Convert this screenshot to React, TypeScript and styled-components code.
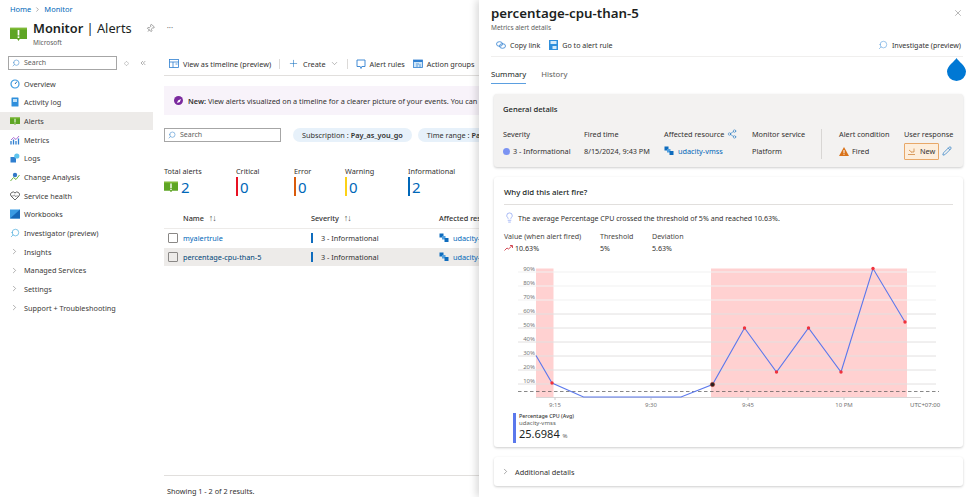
import React from 'react';
import styled, { createGlobalStyle } from 'styled-components';
import { ChevronDown, ChevronRight, ChevronsLeft, Diamond, Lightbulb, Pencil, Pin, Plus, Search, Share2, X } from 'lucide-react';

const GlobalStyle = createGlobalStyle`
  html, body { margin: 0; padding: 0; background: #fff; }
  body { font-family: "Noto Sans", "Open Sans", sans-serif; color: #323130; }
`;

const blue = '#0067b8';

const AlertGlyph = ({ size = 16 }: { size?: number }) => (
  <svg width={size} height={size * 0.85} viewBox="0 0 20 17">
    <path d="M0 1h20v13H11.5L10 16.5 8.500 14H0z" fill="#5ea524" />
    <path d="M0 1h20v2H0z" fill="#7fba35" />
    <rect x="9" y="3.500" width="2" height="6.500" fill="#fff" />
    <rect x="9" y="11" width="2" height="2" fill="#fff" />
  </svg>
);

const ResourceGlyph = () => (
  <svg width="10" height="10" viewBox="0 0 10 10">
    <rect x="0.500" y="0.500" width="4" height="4" fill="#0f6cbd" />
    <rect x="3" y="3" width="3.500" height="3.500" fill="#50a0e0" />
    <rect x="5.500" y="5" width="4" height="4" fill="#0f6cbd" />
  </svg>
);

const navIcons: Record<string, React.ReactNode> = {
  Overview: (
    <svg width="10" height="10" viewBox="0 0 10 10">
      <circle cx="5" cy="5" r="4" fill="none" stroke="#3b9ae1" strokeWidth="1.200" />
      <path d="M5 5l2-2.500" stroke="#1f6fb5" strokeWidth="1" />
    </svg>
  ),
  'Activity log': (
    <svg width="10" height="10" viewBox="0 0 10 10">
      <rect x="1.500" y="0.500" width="7" height="9" rx="0.500" fill="#2f8fdc" />
      <rect x="3" y="2" width="4" height="3" fill="#bfe0f7" />
    </svg>
  ),
  Alerts: <AlertGlyph size={10} />,
  Metrics: (
    <svg width="10" height="10" viewBox="0 0 10 10">
      <path d="M1 9.500V6M3.500 9.500V4.500M6 9.500V6M8.500 9.500V3.500" stroke="#2f7fd0" strokeWidth="1.300" />
      <path d="M1 5l2.500-2.500L6 4.500 9 1" fill="none" stroke="#9b4fc9" strokeWidth="0.800" />
    </svg>
  ),
  Logs: (
    <svg width="10" height="10" viewBox="0 0 10 10">
      <rect x="0.500" y="4" width="5.500" height="5.500" fill="#2f7fd0" />
      <circle cx="6.800" cy="3" r="2.600" fill="#5ec4ee" />
    </svg>
  ),
  'Change Analysis': (
    <svg width="10" height="10" viewBox="0 0 10 10">
      <path d="M0.500 9L3.500 5.500 6 7.500 9.500 3" fill="none" stroke="#6cb43c" strokeWidth="1" />
      <circle cx="5" cy="3" r="2.200" fill="#3378c6" />
    </svg>
  ),
  'Service health': (
    <svg width="10" height="10" viewBox="0 0 10 10">
      <path d="M5 9L1 5a2.400 2.400 0 0 1 4-3 2.400 2.400 0 0 1 4 3z" fill="none" stroke="#555" strokeWidth="0.900" />
      <path d="M1.500 5h2l1-1.200 1 2 .7-.8h2" fill="none" stroke="#555" strokeWidth="0.600" />
    </svg>
  ),
  Workbooks: (
    <svg width="10" height="10" viewBox="0 0 10 10">
      <rect width="10" height="9" y="0.500" fill="#3a9be3" />
      <path d="M0 9.500L10 .5v9z" fill="#1668b8" />
    </svg>
  ),
  'Investigator (preview)': <Search size={10} color="#38a3d8" strokeWidth={1.500} style={{ transform: 'scaleX(-1)' }} />,
};

const navItems = ['Overview', 'Activity log', 'Alerts', 'Metrics', 'Logs', 'Change Analysis', 'Service health', 'Workbooks', 'Investigator (preview)'];
const navGroups = ['Insights', 'Managed Services', 'Settings', 'Support + Troubleshooting'];

const stats = [
  { label: 'Total alerts', value: '2', width: 72 },
  { label: 'Critical', value: '0', color: '#e81123', width: 58 },
  { label: 'Error', value: '0', color: '#da5b0b', width: 51 },
  { label: 'Warning', value: '0', color: '#fcd116', width: 63 },
  { label: 'Informational', value: '2', color: '#0067b8', width: 60 },
];

const rows = ['myalertrule', 'percentage-cpu-than-5'];

const details = [
  { label: 'Severity', width: 81, value: <><SeverityDot />3 - Informational</> },
  { label: 'Fired time', width: 80, value: '8/15/2024, 9:43 PM' },
  {
    label: 'Affected resource',
    width: 88,
    icon: <Share2 size={10} color="#0f6cbd" strokeWidth={1.200} />,
    value: <InlineLink><ResourceGlyph />udacity-vmss</InlineLink>,
  },
  { label: 'Monitor service', width: 69, value: 'Platform' },
];

const yLabels = ['90%', '80%', '70%', '60%', '50%', '40%', '30%', '20%', '10%'];
const linePoints = [
  [536, 354.5], [552, 382], [583.5, 396], [681, 396], [712.5, 383.5], [744.5, 327],
  [776.5, 371], [808.5, 327], [841, 371], [873, 267.5], [905, 321],
];
const firedPoints = linePoints.slice(5);
const xTicks = [
  { x: 555, label: '9:15' },
  { x: 651, label: '9:30' },
  { x: 748, label: '9:45' },
  { x: 844, label: '10 PM' },
];

const Chart = () => (
  <ChartSvg width="440" height="148" viewBox="510 262 440 148">
    <rect x="536" y="267.500" width="17.500" height="129" fill="#ff0000" fillOpacity="0.180" />
    <rect x="711" y="267.500" width="196" height="129" fill="#ff0000" fillOpacity="0.180" />
    {yLabels.map((label, i) => (
      <g key={label}>
        <line x1="518" x2="936" y1={271 + i * 14} y2={271 + i * 14} stroke={i < 3 ? '#f1f1f1' : '#e2e0e0'} />
        <text x="535" y={269.500 + i * 14} textAnchor="end" fontSize="6" fill="#777">{label}</text>
      </g>
    ))}
    <line x1="536" x2="921" y1="396.500" y2="396.500" stroke="#d8d6d6" />
    <line x1="518" x2="939" y1="390.500" y2="390.500" stroke="#555" strokeWidth="0.700" strokeDasharray="3.500 2.500" />
    {xTicks.map(t => (
      <g key={t.label}>
        <line x1={t.x} x2={t.x} y1="396.500" y2="399" stroke="#ccc" />
        <text x={t.x} y="405.500" textAnchor="middle" fontSize="6" fill="#777">{t.label}</text>
      </g>
    ))}
    <text x="910" y="405.500" fontSize="6" fill="#666">UTC+07:00</text>
    <polyline points={linePoints.map(p => p.join(',')).join(' ')} fill="none" stroke="#5b78ec" strokeWidth="1.100" />
    <circle cx="552" cy="382" r="1.700" fill="#f0323c" />
    <circle cx="712.500" cy="383.500" r="2.200" fill="#2b2020" stroke="#c43" strokeWidth="0.500" />
    {firedPoints.map(([x, y]) => <circle key={x} cx={x} cy={y} r="1.700" fill="#f0323c" />)}
  </ChartSvg>
);

export default function App() {
  return (
    <Page>
      <GlobalStyle />
      <Blade>
        <Breadcrumb>
          <a>Home</a><ChevronRight size={7} color="#777" /><a>Monitor</a>
        </Breadcrumb>
        <BladeHeader>
          <AlertGlyph size={17} />
          <BladeTitles>
            <BladeTitle>Monitor <span>| Alerts</span></BladeTitle>
            <BladeSubtitle>Microsoft</BladeSubtitle>
          </BladeTitles>
          <Pin size={9} color="#444" strokeWidth={1.200} style={{ transform: 'rotate(40deg)', marginLeft: 14, marginTop: 4 }} />
          <MoreDots>···</MoreDots>
        </BladeHeader>
        <BladeBody>
          <Sidebar>
            <SidebarTop>
              <SearchBox $width={109}><Search size={8} color="#5b9bd5" style={{ transform: 'scaleX(-1)' }} />Search</SearchBox>
              <Diamond size={5} color="#777" />
              <ChevronsLeft size={8} color="#888" style={{ marginLeft: 3 }} />
            </SidebarTop>
            <NavList>
              {navItems.map(name => (
                <NavItem key={name} $active={name === 'Alerts'}>
                  <NavIcon>{navIcons[name]}</NavIcon>{name}
                </NavItem>
              ))}
              {navGroups.map(name => (
                <NavItem key={name}>
                  <NavIcon><ChevronRight size={9} color="#555" strokeWidth={1.200} /></NavIcon>{name}
                </NavItem>
              ))}
            </NavList>
          </Sidebar>
          <Main>
            <Toolbar>
              <ToolButton>
                <svg width="10" height="9" viewBox="0 0 10 9">
                  <rect x="0.500" y="0.500" width="9" height="8" fill="none" stroke="#2f7fd0" strokeWidth="0.800" />
                  <path d="M.5 3h9M4 3v5.500M6.500 5h2" stroke="#2f7fd0" strokeWidth="0.800" />
                </svg>
                View as timeline (preview)
              </ToolButton>
              <ToolDivider />
              <ToolButton>
                <Plus size={11} color="#0f6cbd" strokeWidth={1.200} />Create
                <ChevronDown size={9} color="#666" strokeWidth={1.200} />
              </ToolButton>
              <ToolDivider />
              <ToolButton>
                <svg width="10" height="10" viewBox="0 0 10 10">
                  <path d="M1 1h8v6.500H5.800L5 9.500 4.200 7.500H1z" fill="none" stroke="#2f7fd0" strokeWidth="0.900" />
                </svg>
                Alert rules
              </ToolButton>
              <ToolButton>
                <svg width="10" height="10" viewBox="0 0 10 10">
                  <rect x="0.500" y="1" width="9" height="7.500" fill="#cfe6f8" stroke="#2f7fd0" strokeWidth="0.800" />
                  <rect x="0.500" y="1" width="9" height="2" fill="#2f7fd0" />
                  <path d="M3 5h3M3 7h2M7 5v3.500" stroke="#2f7fd0" strokeWidth="0.700" />
                </svg>
                Action groups
              </ToolButton>
            </Toolbar>
            <Banner>
              <BannerBadge>
                <svg width="6" height="6" viewBox="0 0 6 6"><path d="M1 5l1-2.500L5 1 3.800 4z" fill="#fff" /></svg>
              </BannerBadge>
              <BannerText><b>New:</b> View alerts visualized on a timeline for a clearer picture of your events. You can switch back</BannerText>
            </Banner>
            <FilterRow>
              <SearchBox $width={117}><Search size={8} color="#5b9bd5" style={{ transform: 'scaleX(-1)' }} />Search</SearchBox>
              <FilterPill $left={12}>Subscription : <b>Pay_as_you_go</b></FilterPill>
              <FilterPill $left={6}>Time range : <b>Past 24h</b></FilterPill>
            </FilterRow>
            <StatRow>
              {stats.map(s => (
                <Stat key={s.label} style={{ width: s.width }}>
                  <StatLabel>{s.label}</StatLabel>
                  <StatValue $color={s.color}>
                    {!s.color && <AlertGlyph size={14} />}
                    {s.value}
                  </StatValue>
                </Stat>
              ))}
            </StatRow>
            <AlertTable>
              <TableRow $header>
                <span />
                <span>Name <SortMark>↑↓</SortMark></span>
                <span>Severity <SortMark>↑↓</SortMark></span>
                <span>Affected resource</span>
              </TableRow>
              {rows.map((name, i) => (
                <TableRow key={name} $selected={i === 1}>
                  <Checkbox />
                  <RowLink $selected={i === 1}>{name}</RowLink>
                  <SeverityCell><SeverityBar />3 - Informational</SeverityCell>
                  <InlineLink><ResourceGlyph />udacity-vmss</InlineLink>
                </TableRow>
              ))}
            </AlertTable>
            <Footer>Showing 1 - 2 of 2 results.</Footer>
          </Main>
        </BladeBody>
      </Blade>
      <Panel>
        <PanelHead>
          <PanelTitle>percentage-cpu-than-5</PanelTitle>
          <X size={10} color="#666" strokeWidth={1.100} />
        </PanelHead>
        <PanelSubtitle>Metrics alert details</PanelSubtitle>
        <PanelToolbar>
          <ToolButton>
            <svg width="10" height="8" viewBox="0 0 10 8">
              <ellipse cx="3.500" cy="3" rx="3" ry="2.300" fill="none" stroke="#2f7fd0" strokeWidth="0.800" />
              <ellipse cx="6.500" cy="5" rx="3" ry="2.300" fill="none" stroke="#2f7fd0" strokeWidth="0.800" />
            </svg>
            Copy link
          </ToolButton>
          <ToolButton>
            <svg width="9" height="10" viewBox="0 0 9 10">
              <rect width="9" height="10" fill="#2f8fdc" />
              <rect x="1.500" y="1" width="6" height="3" fill="#d5ebfa" />
              <rect x="3.500" y="6" width="4" height="3" fill="#d5ebfa" />
            </svg>
            Go to alert rule
          </ToolButton>
          <ToolSpacer />
          <ToolButton>
            <Search size={10} color="#3f8fd8" strokeWidth={1.200} style={{ transform: 'scaleX(-1)' }} />
            Investigate (preview)
          </ToolButton>
        </PanelToolbar>
        <Tabs>
          <Tab $active>Summary</Tab>
          <Tab>History</Tab>
        </Tabs>
        <Droplet>
          <svg width="19" height="23" viewBox="0 0 19 23">
            <path d="M9.500 0C11 3 19 8 19 13.500A9.500 9.500 0 0 1 0 13.500C0 8 8 3 9.500 0z" fill="#0078d4" />
          </svg>
        </Droplet>
        <GeneralCard>
          <CardTitle>General details</CardTitle>
          <DetailsRow>
            {details.map(d => (
              <Detail key={d.label} style={{ width: d.width }}>
                <DetailLabel>{d.label}{d.icon}</DetailLabel>
                <DetailValue>{d.value}</DetailValue>
              </Detail>
            ))}
            <DetailDivider />
            <Detail style={{ width: 65 }}>
              <DetailLabel>Alert condition</DetailLabel>
              <DetailValue>
                <svg width="10" height="9" viewBox="0 0 10 9">
                  <path d="M5 0l5 9H0z" fill="#d9731a" />
                  <rect x="4.500" y="3" width="1" height="3.200" fill="#fff" />
                  <rect x="4.500" y="6.800" width="1" height="1" fill="#fff" />
                </svg>
                Fired
              </DetailValue>
            </Detail>
            <Detail>
              <DetailLabel>User response</DetailLabel>
              <DetailValue>
                <NewBadge>
                  <svg width="8" height="7" viewBox="0 0 8 7">
                    <path d="M0 6.500h7M1 2l3 2.500M6 .5v3.500H3.500" fill="none" stroke="#c8782a" strokeWidth="0.700" />
                  </svg>
                  New
                </NewBadge>
                <Pencil size={10} color="#0f6cbd" strokeWidth={1.500} />
              </DetailValue>
            </Detail>
          </DetailsRow>
        </GeneralCard>
        <WhyCard>
          <WhyTitle>Why did this alert fire?</WhyTitle>
          <Insight>
            <Lightbulb size={11} color="#6f8cf0" strokeWidth={1.300} />
            The average Percentage CPU crossed the threshold of 5% and reached 10.63%.
          </Insight>
          <Metrics>
            <Metric style={{ width: 96 }}>
              <span>Value (when alert fired)</span>
              <MetricValue>
                <svg width="9" height="6" viewBox="0 0 9 6">
                  <path d="M.5 5.500L3 3l1.500 1L8 .8M6 .5h2.500V3" fill="none" stroke="#c8202c" strokeWidth="0.800" />
                </svg>
                10.63%
              </MetricValue>
            </Metric>
            <Metric style={{ width: 52 }}><span>Threshold</span><MetricValue>5%</MetricValue></Metric>
            <Metric><span>Deviation</span><MetricValue>5.63%</MetricValue></Metric>
          </Metrics>
          <Chart />
          <Legend>
            <LegendName>Percentage CPU (Avg)</LegendName>
            <LegendSource>udacity-vmss</LegendSource>
            <LegendValue>25.6984 <small>%</small></LegendValue>
          </Legend>
        </WhyCard>
        <AdditionalCard>
          <ChevronRight size={9} color="#444" strokeWidth={1.200} />
          Additional details
        </AdditionalCard>
      </Panel>
    </Page>
  );
}

function SeverityDot() {
  return <Dot />;
}

function InlineLink({ children }: { children: React.ReactNode }) {
  return <ResourceLink>{children}</ResourceLink>;
}

const Page = styled.div`
  display: flex;
  width: 977px;
  height: 497px;
  overflow: hidden;
  font-size: 7.3px;
  line-height: 10px;
`;

const Blade = styled.div`
  width: 479px;
  flex: none;
  overflow: hidden;
  display: flex;
  flex-direction: column;
`;

const Breadcrumb = styled.div`
  display: flex;
  align-items: center;
  gap: 3px;
  height: 10px;
  margin: 4px 0 0 10px;
  font-size: 7.5px;
  color: ${blue};
`;

const BladeHeader = styled.div`
  display: flex;
  align-items: flex-start;
  height: 26px;
  margin: 6px 0 0 10px;
  svg:first-child { margin-top: 7px; }
`;

const BladeTitles = styled.div`
  margin-left: 6px;
`;

const BladeTitle = styled.div`
  font-size: 12.800px;
  line-height: 16px;
  font-weight: 600;
  color: #201f1e;
  white-space: nowrap;
  span { font-weight: 400; }
`;

const BladeSubtitle = styled.div`
  font-size: 6.500px;
  line-height: 9px;
  margin-top: 2px;
  color: #605e5c;
`;

const MoreDots = styled.span`
  margin: 3px 0 0 12px;
  color: #777;
  font-size: 8px;
`;

const BladeBody = styled.div`
  display: flex;
  flex: 1;
  margin-top: 10px;
`;

const Sidebar = styled.div`
  width: 153px;
  flex: none;
`;

const SidebarTop = styled.div`
  display: flex;
  align-items: center;
  gap: 7px;
  margin-left: 8px;
  height: 14px;
`;

const SearchBox = styled.div<{ $width: number }>`
  box-sizing: border-box;
  width: ${p => p.$width}px;
  height: 14px;
  flex: none;
  display: flex;
  align-items: center;
  gap: 4px;
  padding-left: 3px;
  border: 1px solid #a6a6a6;
  border-bottom-width: 1.500px;
  color: #605e5c;
  font-size: 7px;
`;

const NavList = styled.div`
  margin-top: 4.500px;
`;

const NavItem = styled.div<{ $active?: boolean }>`
  display: flex;
  align-items: center;
  height: 18.650px;
  padding-left: 10px;
  color: #3b3a39;
  white-space: nowrap;
  background: ${p => (p.$active ? '#edebe9' : 'transparent')};
`;

const NavIcon = styled.span`
  width: 14px;
  display: flex;
  align-items: center;
`;

const Main = styled.div`
  flex: 1;
  min-width: 0;
  padding-left: 11px;
  display: flex;
  flex-direction: column;
  overflow: hidden;
`;

const Toolbar = styled.div`
  display: flex;
  align-items: center;
  gap: 8px;
  height: 17px;
  padding: 0 0 3px 5px;
  margin-top: -1px;
  border-bottom: 1px solid #e1dfdd;
  white-space: nowrap;
`;

const ToolButton = styled.span`
  display: inline-flex;
  align-items: center;
  gap: 4px;
  color: #323130;
  white-space: nowrap;
`;

const ToolDivider = styled.span`
  width: 1px;
  height: 10px;
  background: #dcdad8;
`;

const Banner = styled.div`
  display: flex;
  align-items: center;
  gap: 5px;
  height: 29px;
  margin-top: 10px;
  padding-left: 10px;
  background: #f8f3fa;
  white-space: nowrap;
  overflow: hidden;
`;

const BannerBadge = styled.span`
  width: 9px;
  height: 9px;
  flex: none;
  border-radius: 50%;
  background: #7b2a9e;
  display: flex;
  align-items: center;
  justify-content: center;
`;

const BannerText = styled.span`
  color: #323130;
  b { font-weight: 600; }
`;

const FilterRow = styled.div`
  display: flex;
  align-items: center;
  margin-top: 13px;
  white-space: nowrap;
  overflow: hidden;
`;

const FilterPill = styled.span<{ $left: number }>`
  flex: none;
  height: 14px;
  display: inline-flex;
  align-items: center;
  margin-left: ${p => p.$left}px;
  padding: 0 9px;
  border-radius: 8px;
  background: #e7f1fa;
  b { font-weight: 600; margin-left: 2px; }
`;

const StatRow = styled.div`
  display: flex;
  margin-top: 24px;
`;

const Stat = styled.div`
  flex: none;
`;

const StatLabel = styled.div`
  white-space: nowrap;
  color: #323130;
`;

const StatValue = styled.div<{ $color?: string }>`
  display: flex;
  align-items: center;
  gap: 3px;
  height: 19px;
  margin-top: 1px;
  font-size: 15px;
  color: ${blue};
  padding-left: ${p => (p.$color ? '2px' : '0')};
  border-left: ${p => (p.$color ? `2.500px solid ${p.$color}` : 'none')};
`;

const AlertTable = styled.div`
  margin-top: 13px;
`;

const TableRow = styled.div<{ $header?: boolean; $selected?: boolean }>`
  display: grid;
  grid-template-columns: 19px 128px 128px 1fr;
  align-items: center;
  box-sizing: border-box;
  height: ${p => (p.$header ? '20px' : '18.700px')};
  padding-bottom: ${p => (p.$header ? '2px' : '0')};
  white-space: nowrap;
  font-weight: ${p => (p.$header ? 500 : 400)};
  background: ${p => (p.$selected ? '#edebe9' : 'transparent')};
  border-bottom: ${p => (p.$header ? '1px solid #edebe9' : 'none')};
`;

const SortMark = styled.span`
  margin-left: 3px;
  font-size: 9px;
  letter-spacing: -1px;
  color: #555;
`;

const Checkbox = styled.span`
  width: 10px;
  height: 10px;
  margin-left: 4px;
  box-sizing: border-box;
  border: 1px solid #8a8886;
  border-radius: 1px;
`;

const RowLink = styled.span<{ $selected?: boolean }>`
  color: ${p => (p.$selected ? '#004578' : blue)};
`;

const SeverityCell = styled.span`
  display: flex;
  align-items: center;
`;

const SeverityBar = styled.span`
  width: 2px;
  height: 10px;
  margin-right: 8px;
  background: #0f6cbd;
`;

const ResourceLink = styled.span`
  display: inline-flex;
  align-items: center;
  gap: 4px;
  color: ${blue};
`;

const Footer = styled.div`
  margin-top: auto;
  height: 22px;
  padding: 10px 0 0 3px;
  box-sizing: border-box;
  border-top: 1px solid #e1dfdd;
`;

const Panel = styled.div`
  position: relative;
  flex: 1;
  box-sizing: border-box;
  padding: 0 14px 0 15px;
  background: #fff;
  box-shadow: -3px 0 7px rgba(0, 0, 0, 0.14);
`;

const PanelHead = styled.div`
  display: flex;
  align-items: center;
  justify-content: space-between;
  margin: 2px 0 0 -3px;
  height: 21px;
`;

const PanelTitle = styled.div`
  font-size: 13.300px;
  font-weight: 600;
  color: #201f1e;
`;

const PanelSubtitle = styled.div`
  margin: 0 0 0 -3px;
  font-size: 6.500px;
  line-height: 9px;
  color: #605e5c;
`;

const PanelToolbar = styled.div`
  display: flex;
  align-items: center;
  gap: 9px;
  height: 25px;
  margin: 0 0 0 -3px;
  padding: 2px 2px 0 5px;
  font-size: 7.100px;
  border-bottom: 1.500px solid #f0efee;
  box-sizing: border-box;
`;

const ToolSpacer = styled.span`
  flex: 1;
`;

const Tabs = styled.div`
  display: flex;
  gap: 15px;
  height: 27px;
  margin-left: -3px;
`;

const Tab = styled.div<{ $active?: boolean }>`
  display: flex;
  align-items: center;
  height: 27px;
  box-sizing: border-box;
  font-size: 7.800px;
  padding-top: 7px;
  color: ${p => (p.$active ? '#201f1e' : '#605e5c')};
  border-bottom: ${p => (p.$active ? '1.500px solid #5b9fe0' : '1.500px solid transparent')};
`;

const Droplet = styled.div`
  position: absolute;
  top: 58px;
  left: 468px;
  line-height: 0;
`;

const Card = styled.div`
  box-sizing: border-box;
  border-radius: 3px;
  box-shadow: 0 1px 2.500px rgba(0, 0, 0, 0.2);
`;

const GeneralCard = styled(Card)`
  height: 73px;
  margin-top: 10px;
  padding: 10px 9px 0;
  background: #f3f2f1;
`;

const CardTitle = styled.div`
  font-size: 7.600px;
  font-weight: 500;
  color: #201f1e;
`;

const DetailsRow = styled.div`
  display: flex;
  align-items: stretch;
  margin-top: 15px;
`;

const Detail = styled.div`
  flex: none;
`;

const DetailLabel = styled.div`
  display: flex;
  align-items: center;
  gap: 3px;
  height: 10px;
  white-space: nowrap;
`;

const DetailValue = styled.div`
  display: flex;
  align-items: center;
  gap: 3px;
  height: 16px;
  margin-top: 4px;
  white-space: nowrap;
`;

const Dot = styled.span`
  width: 7px;
  height: 7px;
  border-radius: 50%;
  background: #7b93f2;
`;

const DetailDivider = styled.span`
  width: 1px;
  margin-right: 17px;
  background: #d8d6d4;
`;

const NewBadge = styled.span`
  display: inline-flex;
  align-items: center;
  gap: 4px;
  height: 15px;
  padding: 0 3px;
  background: #fdeedc;
  border: 1px solid #e8a868;
  border-radius: 1px;
`;

const WhyCard = styled(Card)`
  height: 270px;
  margin-top: 10px;
  padding: 10px 10px 0;
  background: #fff;
  font-size: 7.100px;
`;

const WhyTitle = styled.div`
  height: 17px;
  font-size: 7.800px;
  font-weight: 500;
  color: #201f1e;
  border-bottom: 1px solid #e1dfdd;
`;

const Insight = styled.div`
  display: flex;
  align-items: center;
  gap: 3px;
  margin-top: 7px;
  white-space: nowrap;
`;

const Metrics = styled.div`
  display: flex;
  margin-top: 8px;
  color: #484644;
`;

const Metric = styled.div`
  display: flex;
  flex-direction: column;
  gap: 2px;
  flex: none;
`;

const MetricValue = styled.span`
  display: flex;
  align-items: center;
  gap: 2px;
  color: #323130;
`;

const ChartSvg = styled.svg`
  display: block;
  margin: 9.500px 0 0 6px;
  font-family: "Noto Sans", sans-serif;
`;

const Legend = styled.div`
  margin: 2.500px 0 0 9px;
  padding-left: 3px;
  border-left: 3px solid #5b78ec;
`;

const LegendName = styled.div`
  font-size: 5.300px;
  line-height: 7px;
  font-weight: 500;
`;

const LegendSource = styled.div`
  font-size: 6px;
  line-height: 7px;
  color: #605e5c;
`;

const LegendValue = styled.div`
  font-size: 11px;
  line-height: 13px;
  color: #201f1e;
  small { font-size: 6px; color: #605e5c; }
`;

const AdditionalCard = styled(Card)`
  display: flex;
  align-items: center;
  gap: 5px;
  height: 29px;
  margin-top: 10px;
  padding-left: 7px;
  background: #fff;
`;
